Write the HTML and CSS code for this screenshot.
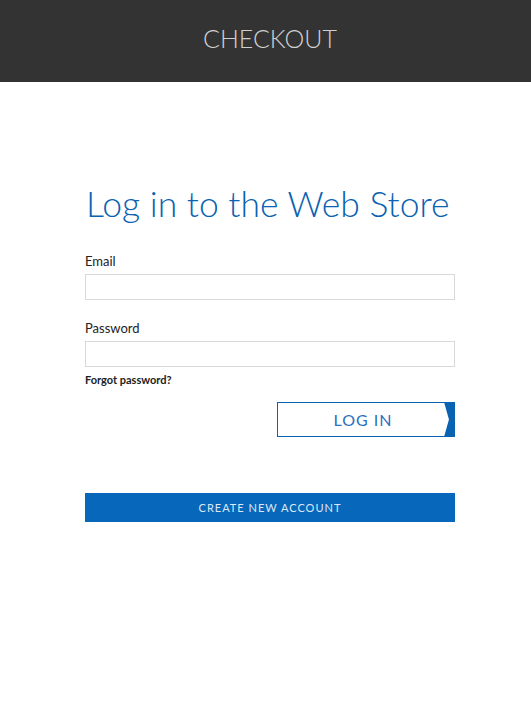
FILE: index.html
```html
<!DOCTYPE html>
<html lang="en">
<head>
    <meta charset="UTF-8">
    <meta name="viewport" content="width=device-width, initial-scale=1.0">
    <title>Checkout</title>
    <link rel="stylesheet" href="styles.css">
</head>
<body>
    <header class="top-bar">
        <h1 class="top-title">CHECKOUT</h1>
    </header>
    <main class="login">
        <h2 class="login-title">Log in to the Web Store</h2>
        <form class="login-form" onsubmit="return false">
            <label class="field-label" for="email">Email</label>
            <input class="field-input" id="email" type="email">
            <label class="field-label" for="password">Password</label>
            <input class="field-input" id="password" type="password">
            <a class="forgot" href="#">Forgot password?</a>
            <div class="actions">
                <button class="btn-login" type="submit">LOG IN</button>
            </div>
        </form>
        <button class="btn-create" type="button">CREATE NEW ACCOUNT</button>
    </main>
</body>
</html>
```
FILE: styles.css
```css
*{padding: 0;margin: 0;box-sizing: border-box;}
body{background: #fff;font-family: "Lato", "Open Sans", sans-serif;color: #222;}
.top-bar{height: 82px;background: #333;display: flex;align-items: center;justify-content: center;padding-left: 9px;}
.top-title{font-weight: 300;font-size: 25px;color: #cfcfcf;margin-top: -6px;}
.login{width: 370px;margin-left: calc(50% - 180.5px);padding-top: 100px;}
.login-title{font-weight: 300;font-size: 35.5px;color: #0a62b2;line-height: 44px;margin-left: 1px;white-space: nowrap;}
.login-form{display: flex;flex-direction: column;margin-top: 27px;}
.field-label{font-size: 13px;color: #222;line-height: 16px;margin-bottom: 5px;}
.field-input{height: 26px;border: 1px solid #d9d9d9;margin-bottom: 20px;font: inherit;padding: 0 8px;}
#password{margin-bottom: 6px;}
.forgot{font-size: 11px;font-weight: 700;color: #222;text-decoration: none;line-height: 13px;}
.actions{display: flex;justify-content: flex-end;margin-top: 16px;}
.btn-login{position: relative;width: 178px;height: 35px;background: #fff;border: 1px solid #0a62b2;color: #2a6fc0;font-family: inherit;font-size: 16px;font-weight: 400;letter-spacing: 1px;padding-right: 6px;cursor: pointer;}
.btn-login::after{content: "";position: absolute;top: -1px;right: -1px;bottom: -1px;width: 11px;background: #0a62b2;clip-path: polygon(0 0,100% 0,100% 100%,0 100%,45% 50%);}
.btn-create{display: block;width: 100%;height: 29px;margin-top: 56px;background: #0767bb;border: none;color: #dde8f4;font-family: inherit;font-size: 11px;letter-spacing: 1px;cursor: pointer;}
```
